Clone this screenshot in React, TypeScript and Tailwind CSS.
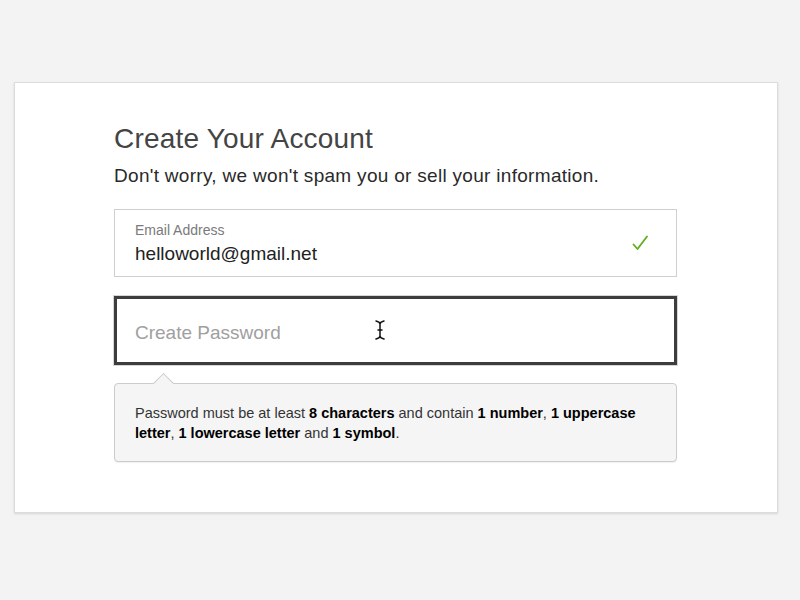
import React from 'react';

const font = { fontFamily: '"Liberation Sans", Arial, sans-serif' };

function Check() {
    return (
        <svg width="18" height="18" viewBox="0 0 18 18" fill="none">
            <path d="M2.5 10.5 L6.5 15 L16 2.5" stroke="#5fae1c" strokeWidth="1.8" strokeLinecap="round" strokeLinejoin="round" />
        </svg>
    );
}

function IBeam() {
    return (
        <svg width="12" height="22" viewBox="0 0 12 22" fill="none">
            <path d="M2 2 Q6 3 6 5 Q6 3 10 2 M6 5 V17 M2 20 Q6 19 6 17 Q6 19 10 20 M4 11 H8" stroke="#111" strokeWidth="1.5" strokeLinecap="round" />
        </svg>
    );
}

export default function App() {
    return (
        <div className="w-[800px] h-[600px] bg-[#f3f3f3] pt-[82px] pl-[14px]" style={font}>
            <div className="w-[764px] h-[431px] bg-white border border-[#dcdcdc] shadow-[0_1px_2px_rgba(0,0,0,0.12)] pl-[99px] pr-[100px] pt-[38px]">
                <h1 className="text-[28px] leading-[36px] text-[#444] tracking-[0.2px]">
                    Create Your Account
                </h1>
                <p className="mt-[7px] text-[19px] leading-[24px] text-[#2a2a2a] tracking-[0.3px]">
                    Don't worry, we won't spam you or sell your information.
                </p>

                {/* email field */}
                <div className="mt-[21px] h-[68px] border border-[#cfcfcf] flex items-center justify-between pl-[20px] pr-[27px]">
                    <div className="flex flex-col">
                        <span className="text-[14px] leading-[16px] text-[#7a7a7a]">Email Address</span>
                        <span className="mt-[5px] text-[19px] leading-[22px] text-[#222]">helloworld@gmail.net</span>
                    </div>
                    <Check />
                </div>

                {/* password field */}
                <div className="relative mt-[19px] h-[69px] border-[3px] border-[#3d3d3d] shadow-[0_0_0_1px_#d6d6d6] flex items-center pl-[18px] pt-[5px]">
                    <span className="text-[19px] text-[#a0a0a0]">Create Password</span>
                    <div className="absolute left-[257px] top-[20px]">
                        <IBeam />
                    </div>
                </div>

                {/* hint */}
                <div className="relative mt-[18px] h-[79px] bg-[#f5f5f5] border border-[#cccccc] rounded-[4px] shadow-[0_1px_1px_rgba(0,0,0,0.06)] pl-[20px] pr-[20px] pt-[19px]">
                    <div className="absolute left-[41px] top-[-8px] w-[15px] h-[15px] bg-[#f5f5f5] border-l border-t border-[#cccccc] rotate-45" />
                    <p className="relative text-[14.5px] leading-[20px] text-[#333]">
                        Password must be at least <b className="text-black">8 characters</b> and contain{' '}
                        <b className="text-black">1 number</b>, <b className="text-black">1 uppercase</b>{' '}
                        <b className="text-black">letter</b>, <b className="text-black">1 lowercase letter</b> and{' '}
                        <b className="text-black">1 symbol</b>.
                    </p>
                </div>
            </div>
        </div>
    );
}
